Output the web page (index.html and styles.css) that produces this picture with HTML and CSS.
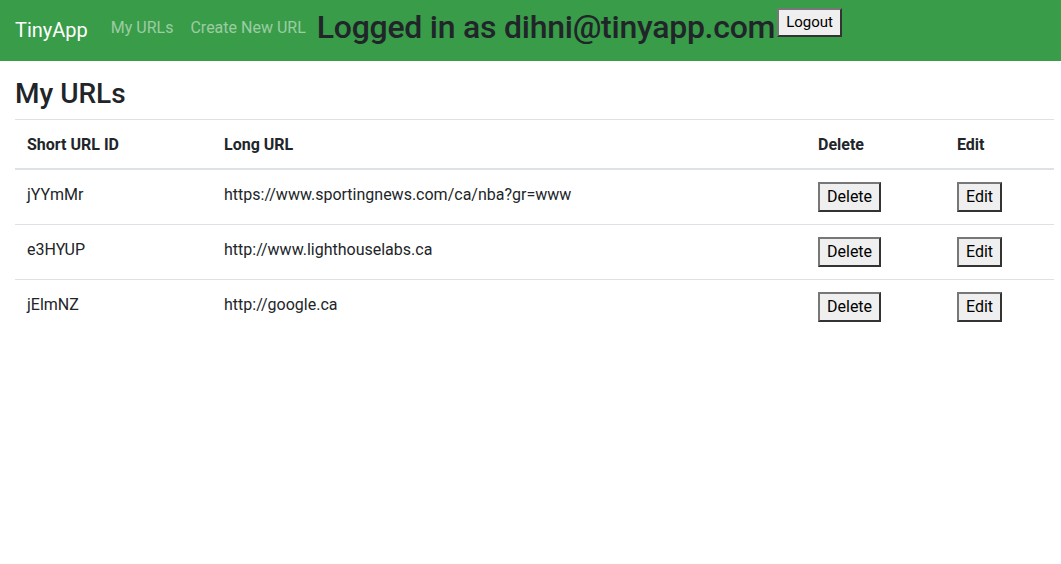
FILE: index.html
```html
<!DOCTYPE html>
<html>
<head>
<meta charset="utf-8">
<link rel="stylesheet" href="styles.css">
</head>
<body>
<nav class="navbar">
  <a class="brand" href="#">TinyApp</a>
  <div class="nav-links">
    <a class="nav-link" href="#">My URLs</a>
    <a class="nav-link" href="#">Create New URL</a>
  </div>
  <div class="login">
    <h2 class="login-title">Logged in as dihni@tinyapp.com</h2>
    <button class="btn btn-logout">Logout</button>
  </div>
</nav>
<main class="container">
  <h3 class="page-title">My URLs</h3>
  <table class="table">
    <thead>
      <tr>
        <th class="col-id">Short URL ID</th>
        <th class="col-long">Long URL</th>
        <th class="col-del">Delete</th>
        <th class="col-edit">Edit</th>
      </tr>
    </thead>
    <tbody>
      <tr>
        <td>jYYmMr</td>
        <td>https://www.sportingnews.com/ca/nba?gr=www</td>
        <td class="cell-btn"><button class="btn">Delete</button></td>
        <td class="cell-btn"><button class="btn">Edit</button></td>
      </tr>
      <tr>
        <td>e3HYUP</td>
        <td>http://www.lighthouselabs.ca</td>
        <td class="cell-btn"><button class="btn">Delete</button></td>
        <td class="cell-btn"><button class="btn">Edit</button></td>
      </tr>
      <tr>
        <td>jElmNZ</td>
        <td>http://google.ca</td>
        <td class="cell-btn"><button class="btn">Delete</button></td>
        <td class="cell-btn"><button class="btn">Edit</button></td>
      </tr>
    </tbody>
  </table>
</main>
</body>
</html>
```

FILE: styles.css
```css
* { box-sizing: border-box; }
html, body {
  margin: 0;
  padding: 0;
  background: #fff;
  color: #212529;
  font-family: Roboto, "Liberation Sans", sans-serif;
  font-size: 16px;
  line-height: 1.5;
}
.navbar {
  display: flex;
  align-items: flex-start;
  background: #389c48;
  padding: 8px 16px 7px 15px;
  height: 61px;
}
.brand {
  color: #fff;
  text-decoration: none;
  font-size: 20px;
  line-height: 30px;
  margin-top: 7px;
  margin-right: 15px;
}
.nav-links {
  display: flex;
  margin-top: 8px;
}
.nav-link {
  color: rgba(255,255,255,0.5);
  text-decoration: none;
  font-size: 16px;
  line-height: 24px;
  padding: 0 8px;
}
.nav-link + .nav-link {
  padding-left: 9px;
}
.login {
  display: flex;
  align-items: flex-start;
  margin-left: 3px;
}
.login-title {
  margin: 0;
  font-size: 32px;
  font-weight: 500;
  line-height: 38px;
  letter-spacing: -0.25px;
  color: #212529;
}
.btn {
  font-family: inherit;
  font-size: 16px;
  line-height: 24px;
  height: 30px;
  padding: 1px 7px;
  background: #efefef;
  color: #000;
  border: 2px solid;
  border-color: #777 #333 #333 #777;
  border-radius: 0;
}
.btn-logout {
  font-size: 15px;
  line-height: 23px;
  height: 29px;
  padding: 1px 7px;
  margin-left: 2px;
}
.container {
  padding: 0 7px 0 15px;
}
.page-title {
  margin: 16px 0 8px;
  font-size: 28px;
  font-weight: 500;
  line-height: 34px;
}
.table {
  width: 100%;
  border-collapse: collapse;
  color: #212529;
}
.table th, .table td {
  text-align: left;
  vertical-align: top;
  padding: 13px 12px 11px;
  border-top: 1px solid #dee2e6;
}
.table td.cell-btn {
  padding: 12px 12px 12px;
  line-height: 0;
}
.table th {
  font-weight: 700;
  border-bottom: 2px solid #dee2e6;
}
.col-id { width: 197px; }
.col-long { width: 594px; }
.col-del { width: 139px; }
```
